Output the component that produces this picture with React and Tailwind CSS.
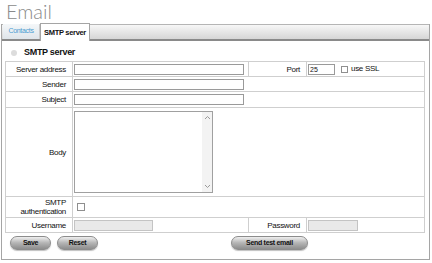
const font = { fontFamily: '"Liberation Sans", Arial, sans-serif' };

const Label = ({ children, className = "" }) => (
  <td className={`border border-[#cfcfcf] text-right pr-[6px] text-[8px] tracking-[-0.3px] text-[#111] leading-[9px] ${className}`}>
    {children}
  </td>
);

const Btn = ({ children, className }) => (
  <button
    className={`${className} h-[14px] rounded-full border border-[#8c8c8c] bg-gradient-to-b from-[#efefef] via-[#b4b4b4] to-[#8e8e8e] text-[7px] font-bold tracking-[-0.3px] text-[#111] shadow-[0_1px_1px_rgba(0,0,0,0.25)]`}
  >
    {children}
  </button>
);

export default function App() {
  return (
    <div className="w-[432px] h-[263px] bg-white overflow-hidden" style={font}>
      <div className="h-[24px] pl-[6px]">
        <h1 className="text-[20px] leading-[22px] font-light text-[#8a8a8a] font-['Lato',sans-serif]">Email</h1>
      </div>

      <div className="ml-[1px] w-[429px] h-[236px] border-x border-b border-[#a5a5a5]">
        {/* tab bar */}
        <div className="flex items-end h-[17px] border-t border-[#b5b5b5] border-b-2 border-b-[#8a8a8a] bg-gradient-to-b from-[#f7f7f7] to-[#d6d6d6]">
          <div className="ml-[1px] w-[37px] h-[15px] flex items-center justify-center text-[7px] tracking-[-0.3px] text-[#4a9bd1] bg-gradient-to-b from-[#f4f7f9] to-[#dfe5ea] border-r border-[#c9c9c9]">
            Contacts
          </div>
          <div className="w-[50px] h-[18px] -mb-[2px] flex items-center justify-center text-[7.5px] font-bold tracking-[-0.3px] text-[#111] bg-white border-x border-t border-[#a5a5a5]">
            SMTP server
          </div>
        </div>

        <div className="flex items-center h-[20px] pl-[9px] pt-[3px]">
          <span className="w-[6px] h-[6px] rounded-full bg-[#dcdcdc]" />
          <span className="ml-[7px] text-[9px] font-bold tracking-[-0.3px] text-[#111]">SMTP server</span>
        </div>

        <table className="ml-[3px] w-[419px] border-collapse border border-[#bdbdbd] table-fixed">
          <colgroup>
            <col className="w-[67px]" />
            <col className="w-[176px]" />
            <col className="w-[58px]" />
            <col className="w-[118px]" />
          </colgroup>
          <tbody>
            <tr className="h-[15px]">
              <Label>Server address</Label>
              <td className="border border-[#cfcfcf] pl-[1px]">
                <div className="w-[170px] h-[11px] border border-[#9a9a9a] bg-white" />
              </td>
              <Label>Port</Label>
              <td className="border border-[#cfcfcf] pl-[1px]">
                <div className="flex items-center">
                  <div className="w-[27px] h-[11px] border border-[#9a9a9a] bg-white text-[7px] leading-[9px] pl-[1px] text-[#111]">25</div>
                  <div className="ml-[6px] w-[7px] h-[7px] border border-[#8f8f8f] bg-white" />
                  <span className="ml-[3px] text-[8px] tracking-[-0.3px] text-[#111]">use SSL</span>
                </div>
              </td>
            </tr>
            <tr className="h-[15px]">
              <Label>Sender</Label>
              <td colSpan={3} className="border border-[#cfcfcf] pl-[1px]">
                <div className="w-[170px] h-[11px] border border-[#9a9a9a] bg-white" />
              </td>
            </tr>
            <tr className="h-[16px]">
              <Label>Subject</Label>
              <td colSpan={3} className="border border-[#cfcfcf] pl-[1px]">
                <div className="w-[170px] h-[11px] border border-[#9a9a9a] bg-white" />
              </td>
            </tr>
            <tr className="h-[89px]">
              <Label>Body</Label>
              <td colSpan={3} className="border border-[#cfcfcf] pl-[1px]">
                <div className="w-[139px] h-[82px] border border-[#a0a0a0] bg-white flex justify-end">
                  <div className="w-[10px] h-full bg-[#f3f3f3] flex flex-col items-center justify-between py-[3px]">
                    <svg width="7" height="5" viewBox="0 0 7 5"><path d="M1 4 L3.5 1.5 L6 4" fill="none" stroke="#9a9a9a" strokeWidth="1" /></svg>
                    <svg width="7" height="5" viewBox="0 0 7 5"><path d="M1 1 L3.5 3.5 L6 1" fill="none" stroke="#9a9a9a" strokeWidth="1" /></svg>
                  </div>
                </div>
              </td>
            </tr>
            <tr className="h-[21px]">
              <Label className="leading-[9px]">
                SMTP
                <br />
                authentication
              </Label>
              <td colSpan={3} className="border border-[#cfcfcf] pl-[4px]">
                <div className="w-[8px] h-[8px] border border-[#8f8f8f] bg-white" />
              </td>
            </tr>
            <tr className="h-[15px]">
              <Label>Username</Label>
              <td className="border border-[#cfcfcf] pl-[1px]">
                <div className="w-[79px] h-[11px] border border-[#c4c4c4] bg-[#e9e9e9]" />
              </td>
              <Label>Password</Label>
              <td className="border border-[#cfcfcf] pl-[1px]">
                <div className="w-[50px] h-[11px] border border-[#c4c4c4] bg-[#e9e9e9]" />
              </td>
            </tr>
          </tbody>
        </table>

        <div className="flex items-center mt-[3px] pl-[8px]">
          <Btn className="w-[41px]">Save</Btn>
          <Btn className="w-[41px] ml-[6px]">Reset</Btn>
          <Btn className="w-[77px] ml-[133px]">Send test email</Btn>
        </div>
      </div>
    </div>
  );
}
